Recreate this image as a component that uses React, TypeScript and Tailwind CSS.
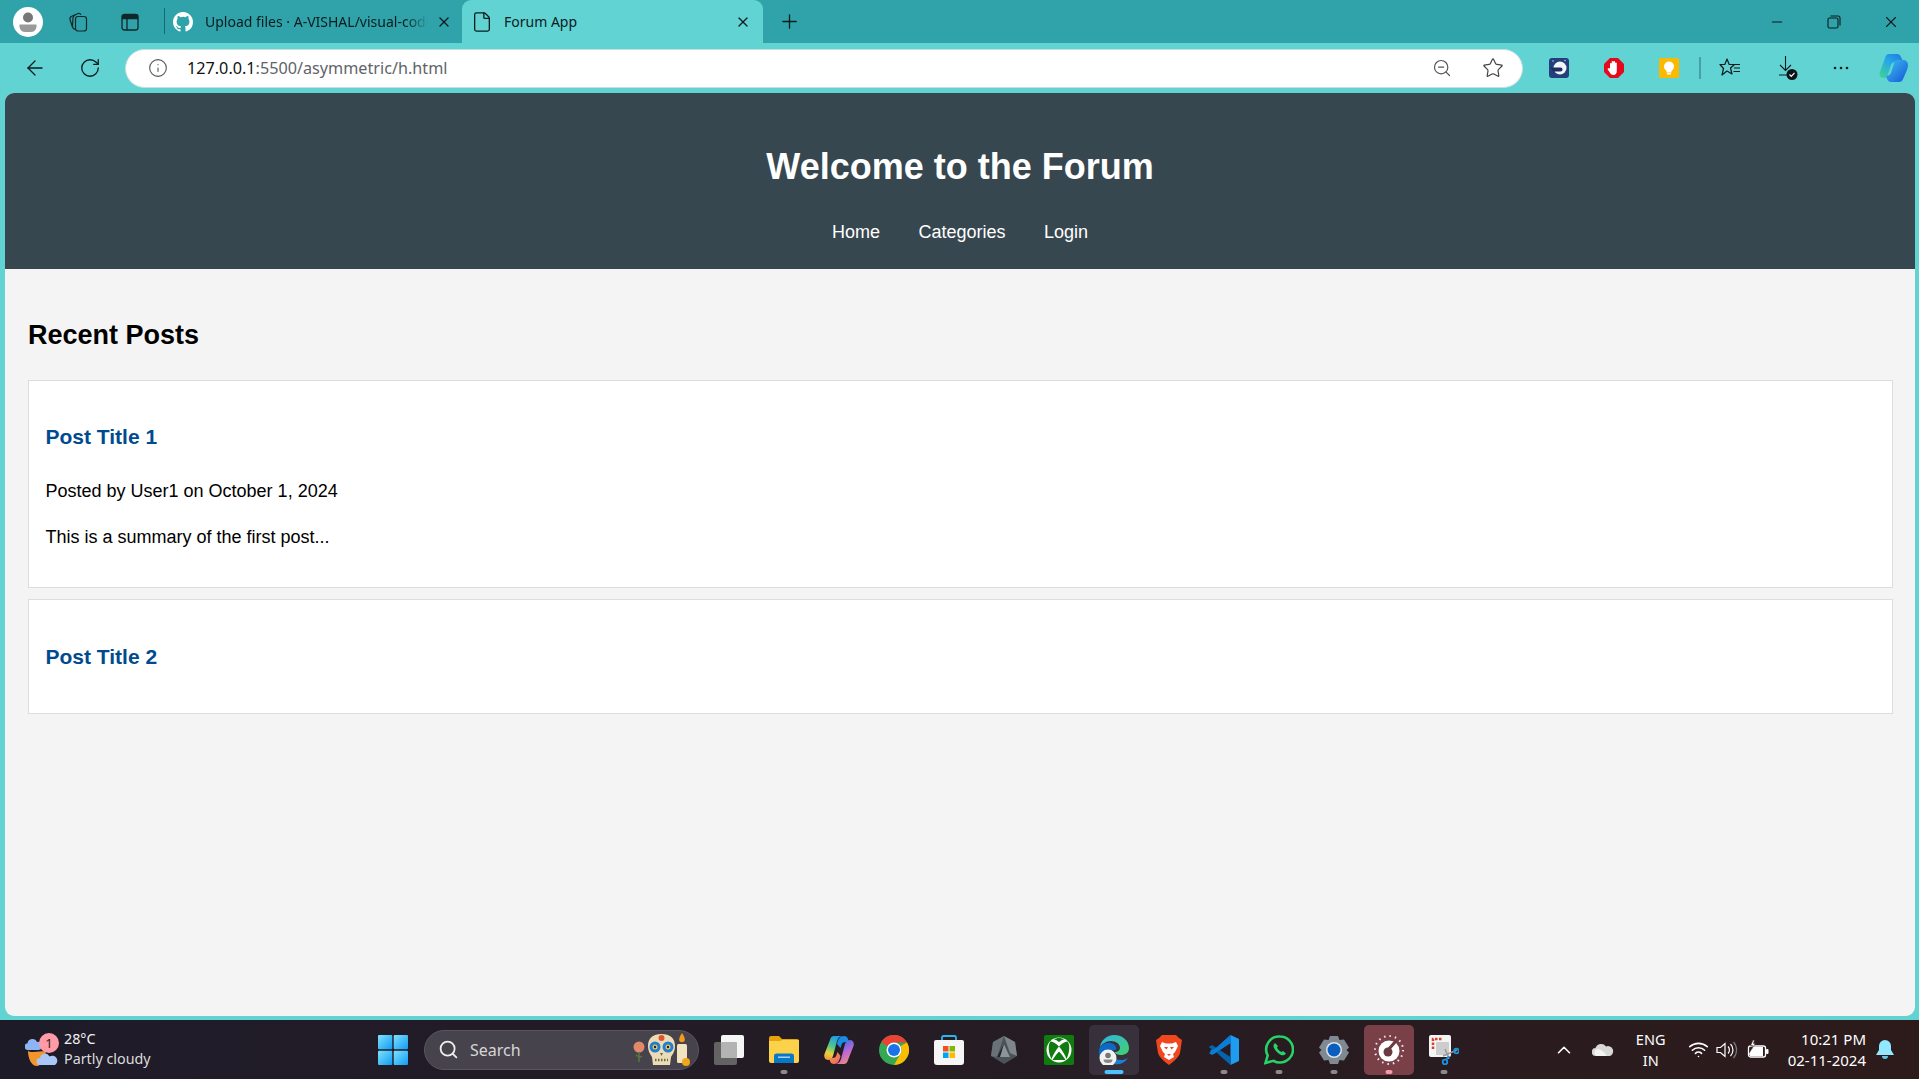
import { ArrowLeft, RotateCw, Info, ZoomOut, Star, X, Plus, Minus, Search, ChevronUp, Wifi, File } from "lucide-react";
import type { ReactNode } from "react";

function Avatar() {
  return (
    <svg width="30" height="30" viewBox="0 0 30 30">
      <circle cx="15" cy="15" r="15" fill="#fff" />
      <circle cx="15" cy="10.5" r="5" fill="#777" />
      <path d="M6.5 17.5h17v2.5a6 6 0 0 1-6 5h-5a6 6 0 0 1-6-5z" fill="#9a9a9a" />
    </svg>
  );
}

function Collections() {
  return (
    <svg width="22" height="22" viewBox="0 0 22 22" fill="none" stroke="#10282a" strokeWidth="1.2">
      <rect x="8.5" y="5.5" width="11" height="14.5" rx="2.5" />
      <path d="M8.5 18.5c-1.5-.3-2.5-1-3-2.5L3 8.5c-.3-1.5.3-2.7 1.700-3.200L11 2.500c1.300-.4 2.300 0 3 1.200" />
      <path d="M5.500 15.500 6 6.500c.2-1.300 1-2 2.300-2.200" />
    </svg>
  );
}

function TabView() {
  return (
    <svg width="20" height="20" viewBox="0 0 20 20" fill="none" stroke="#10282a" strokeWidth="1.3">
      <rect x="2" y="2.500" width="16" height="15.500" rx="2.500" />
      <path d="M2.500 3.500h15v3h-15z" fill="#10282a" />
      <path d="M7 6.500V18" />
    </svg>
  );
}

function GitHub() {
  return (
    <svg width="20" height="20" viewBox="0 0 16 16" fill="#fff">
      <path d="M8 0C3.58 0 0 3.58 0 8c0 3.54 2.29 6.53 5.47 7.59.4.07.55-.17.55-.38 0-.19-.01-.82-.01-1.49-2.01.37-2.53-.49-2.69-.94-.09-.23-.48-.94-.82-1.13-.28-.15-.68-.52-.01-.53.63-.01 1.08.58 1.23.82.72 1.21 1.87.87 2.33.66.07-.52.28-.87.51-1.07-1.78-.2-3.64-.89-3.64-3.95 0-.87.31-1.59.82-2.15-.08-.2-.36-1.02.08-2.12 0 0 .67-.21 2.2.82a7.6 7.6 0 0 1 4 0c1.53-1.04 2.2-.82 2.2-.82.44 1.1.16 1.92.08 2.12.51.56.82 1.27.82 2.15 0 3.07-1.87 3.75-3.65 3.95.29.25.54.73.54 1.48 0 1.07-.01 1.93-.01 2.2 0 .21.15.46.55.38A8 8 0 0 0 16 8c0-4.42-3.58-8-8-8z" />
    </svg>
  );
}

function Restore() {
  return (
    <svg width="14" height="14" viewBox="0 0 14 14" fill="none" stroke="#0b1c1e" strokeWidth="1.1">
      <rect x="1" y="3" width="10" height="10" rx="1.500" />
      <path d="M3.500 1h7.500a2 2 0 0 1 2 2v7.500" />
    </svg>
  );
}

function ExtMoon() {
  return (
    <svg width="20" height="20" viewBox="0 0 20 20">
      <rect width="20" height="20" rx="3" fill="#23407c" />
      <circle cx="11" cy="10" r="6.500" fill="#f3f5fa" />
      <path d="M1 9.500h10.500a2 2 0 0 1 0 4H4z" fill="#1c2f5e" />
      <circle cx="4" cy="3" r=".7" fill="#dfe6f5" />
      <circle cx="16" cy="2.500" r=".7" fill="#dfe6f5" />
    </svg>
  );
}

function ExtStop() {
  return (
    <svg width="20" height="20" viewBox="0 0 20 20">
      <path d="M6 0h8l6 6v8l-6 6H6l-6-6V6z" fill="#e6091c" />
      <path d="M6 10V5.500a.9.9 0 0 1 1.700 0V9V3.500a.9.9 0 0 1 1.700 0V9V3.700a.9.9 0 0 1 1.700 0V9V5a.9.9 0 0 1 1.700 0v8c0 2.500-1.500 4-3.500 4-1.800 0-2.700-1-3.500-2.500L3.700 11.500c-.5-1 .8-1.800 1.500-1z" fill="#fff" />
    </svg>
  );
}

function ExtBulb() {
  return (
    <svg width="20" height="20" viewBox="0 0 20 20">
      <rect width="20" height="20" rx="1.500" fill="#fbb900" />
      <circle cx="10" cy="8.500" r="5" fill="#fff" />
      <rect x="7.500" y="12" width="5" height="2.500" fill="#fff" />
      <rect x="8" y="15" width="4" height="1.500" fill="#fff" />
    </svg>
  );
}

function Favorites() {
  return (
    <svg width="22" height="22" viewBox="0 0 22 22" fill="none" stroke="#0b1c1e" strokeWidth="1.200" strokeLinejoin="round">
      <path d="M8 2 10.200 7.500 H15.500 L11.500 11 13 17 8 14 3 18 4.500 11.500 1 7.500 H5.800z" />
      <path d="M14 7.500h7M15 11h6M14.500 14.500h6.500" />
    </svg>
  );
}

function Download() {
  return (
    <svg width="24" height="26" viewBox="0 0 24 26" fill="none">
      <path d="M8.500 1v14.500M3 10l5.500 5.500L14 10M2 20h8" stroke="#0b1c1e" strokeWidth="1.100" />
      <circle cx="15" cy="19.500" r="5.500" fill="#0b1416" />
      <path d="m12.500 19.500 1.800 1.800 3.200-3.400" stroke="#fff" strokeWidth="1.200" />
    </svg>
  );
}

function Dots() {
  return (
    <svg width="16" height="4" viewBox="0 0 16 4" fill="#0b1c1e">
      <circle cx="2" cy="2" r="1.300" />
      <circle cx="8" cy="2" r="1.300" />
      <circle cx="14" cy="2" r="1.300" />
    </svg>
  );
}

function CopilotLogo() {
  return (
    <svg width="30" height="28" viewBox="0 0 30 28">
      <defs>
        <linearGradient id="cp1" x1="0" y1="0" x2="1" y2="1">
          <stop offset="0" stopColor="#3cc0f0" />
          <stop offset="1" stopColor="#1556d8" />
        </linearGradient>
        <linearGradient id="cp2" x1="0" y1="1" x2=".8" y2="0">
          <stop offset="0" stopColor="#3fd68e" />
          <stop offset=".6" stopColor="#25a8e8" />
          <stop offset="1" stopColor="#1e7ee0" />
        </linearGradient>
      </defs>
      <path d="M10 0h8c2 0 3 1 4 3l3 6c-2-1-4-1-6-1h-3c-2 0-3 1-4 3L9 20c-1 3-3 4-5 4-3 0-4-3-3-6L6 4c.6-2.500 2-4 4-4z" fill="url(#cp2)" />
      <path d="M20 28h-8c-2 0-3-1-4-3l-1-3c2 0 4-1 5-3l3-10c.6-2 2-3 4-3h5c3 0 5 2 5 5 0 2-.5 3-1 5l-4 9c-.6 2-2 3-4 3z" fill="url(#cp1)" />
    </svg>
  );
}

function ToolButton({ w, children }: { w: string; children: ReactNode }) {
  return <div className={`flex shrink-0 items-center justify-center ${w}`}>{children}</div>;
}

function TabStrip() {
  return (
    <div className="flex h-[43px] shrink-0 items-end bg-[#2fa3a9] font-['Noto_Sans',sans-serif] text-[#0b1c1e]">
      <div className="flex h-[43px] w-[164px] shrink-0 items-center pl-[13px]">
        <Avatar />
        <div className="ml-[24px]">
          <Collections />
        </div>
        <div className="ml-[31px]">
          <TabView />
        </div>
      </div>
      <div className="mb-[9px] h-[26px] w-px shrink-0 bg-[#17696e]" />
      <div className="flex h-[43px] w-[297px] shrink-0 items-center pl-[8px]">
        <GitHub />
        <span className="ml-[12px] w-[223px] overflow-hidden text-[14px] whitespace-nowrap [mask-image:linear-gradient(to_right,black_90%,transparent)]">Upload files · A-VISHAL/visual-code</span>
        <X size={16} strokeWidth={1.3} absoluteStrokeWidth className="ml-[8px]" />
      </div>
      <div className="flex h-[43px] w-[301px] shrink-0 items-center rounded-t-[9px] bg-[#62d3d3] pl-[9px]">
        <File size={22} strokeWidth={1.3} absoluteStrokeWidth />
        <span className="ml-[11px] w-[220px] text-[14px]">Forum App</span>
        <X size={16} strokeWidth={1.3} absoluteStrokeWidth className="ml-[11px]" />
      </div>
      <div className="flex h-[43px] w-[52px] shrink-0 items-center justify-center">
        <Plus size={23} strokeWidth={1.3} absoluteStrokeWidth />
      </div>
      <div className="ml-auto flex h-[43px] items-center">
        <ToolButton w="w-[57px]">
          <Minus size={16} strokeWidth={1.1} absoluteStrokeWidth />
        </ToolButton>
        <ToolButton w="w-[57px]">
          <Restore />
        </ToolButton>
        <ToolButton w="w-[57px]">
          <X size={18} strokeWidth={1.1} absoluteStrokeWidth />
        </ToolButton>
      </div>
    </div>
  );
}

function Toolbar() {
  return (
    <div className="flex h-[50px] shrink-0 items-center bg-[#62d3d3] font-['Noto_Sans',sans-serif] text-[#0b1c1e]">
      <ToolButton w="w-[69px]">
        <ArrowLeft size={24} strokeWidth={1.3} absoluteStrokeWidth />
      </ToolButton>
      <ToolButton w="w-[41px]">
        <RotateCw size={22} strokeWidth={1.3} absoluteStrokeWidth />
      </ToolButton>
      <div className="ml-[15px] flex h-[39px] w-[1398px] shrink-0 items-center rounded-full border border-[#c9dede] bg-white pl-[22px]">
        <Info size={20} strokeWidth={1.1} absoluteStrokeWidth className="text-[#555]" />
        <span className="ml-[19px] text-[16.2px] text-[#5f6368]">
          <span className="text-[#111]">127.0.0.1</span>:5500/asymmetric/h.html
        </span>
        <div className="ml-auto flex items-center pr-[18px]">
          <ZoomOut size={20} strokeWidth={1.2} absoluteStrokeWidth className="text-[#555]" />
          <Star size={22} strokeWidth={1.2} absoluteStrokeWidth className="ml-[30px] text-[#444]" />
        </div>
      </div>
      <div className="ml-[16px] flex flex-1 items-center">
        <ToolButton w="w-[40px]">
          <ExtMoon />
        </ToolButton>
        <ToolButton w="w-[40px] ml-[15px]">
          <ExtStop />
        </ToolButton>
        <ToolButton w="w-[40px] ml-[15px]">
          <ExtBulb />
        </ToolButton>
        <div className="ml-[10px] h-[22px] w-[2px] bg-[#48a0a3]" />
        <ToolButton w="w-[40px] ml-[9px]">
          <Favorites />
        </ToolButton>
        <ToolButton w="w-[40px] ml-[19px]">
          <Download />
        </ToolButton>
        <ToolButton w="w-[40px] ml-[12px]">
          <Dots />
        </ToolButton>
        <ToolButton w="w-[40px] ml-[13px]">
          <CopilotLogo />
        </ToolButton>
      </div>
    </div>
  );
}

function ForumPage() {
  return (
    <div className="mr-[4px] mb-[4px] ml-[5px] flex-1 overflow-hidden rounded-[9px] bg-[#f4f4f4] font-['Liberation_Sans',Arial,sans-serif] text-black">
      <header className="h-[176px] bg-[#37474f] pt-[51px] text-center text-white">
        <h1 className="text-[36px] leading-[46px] font-bold">Welcome to the Forum</h1>
        <nav className="mt-[32px] flex justify-center gap-[38.5px] text-[18px] leading-[20px]">
          <span>Home</span>
          <span>Categories</span>
          <span>Login</span>
        </nav>
      </header>
      <main className="pt-[49px] pr-[22px] pl-[23px]">
        <h2 className="text-[27px] leading-[34px] font-bold">Recent Posts</h2>
        <article className="mt-[28px] h-[208px] border border-[#ddd] bg-white px-[16.5px] pt-[44px]">
          <h3 className="text-[21px] leading-[24px] font-bold text-[#004a8f]">Post Title 1</h3>
          <p className="mt-[32px] text-[18px] leading-[20px]">Posted by User1 on October 1, 2024</p>
          <p className="mt-[26px] text-[18px] leading-[20px]">This is a summary of the first post...</p>
        </article>
        <article className="mt-[11px] h-[115px] border border-[#ddd] bg-white px-[16.5px] pt-[45px]">
          <h3 className="text-[21px] leading-[24px] font-bold text-[#004a8f]">Post Title 2</h3>
        </article>
      </main>
    </div>
  );
}

function Weather() {
  return (
    <svg width="34" height="34" viewBox="0 0 34 34">
      <path d="M3 18c2 1 3 1 5 1 5 0 9-1 13-1-1 7-5 15-9 15-6 0-9-8-9-15z" fill="#f2962b" />
      <path d="M2 17a3.500 3.500 0 0 1 .5-6.800A5 5 0 0 1 12 9a4 4 0 0 1 2 8z" fill="#8db4f5" />
      <path d="M15 32a3.500 3.500 0 0 1 0-7 5 5 0 0 1 9.500-1.500A4.500 4.500 0 0 1 30 32z" fill="#a9c6f7" />
      <circle cx="24" cy="10" r="10" fill="#ff9aa6" />
      <text x="24" y="14.500" textAnchor="middle" fontSize="13" fill="#2a1a1e" fontFamily="Noto Sans">1</text>
    </svg>
  );
}

function WinLogo() {
  return (
    <svg width="30" height="30" viewBox="0 0 30 30">
      <defs>
        <linearGradient id="win" x1="0" y1="0" x2="1" y2="1">
          <stop offset="0" stopColor="#7fe2fb" />
          <stop offset="1" stopColor="#0f9bf5" />
        </linearGradient>
      </defs>
      <rect width="14.300" height="14.300" rx="1" fill="url(#win)" />
      <rect x="15.700" width="14.300" height="14.300" rx="1" fill="url(#win)" />
      <rect y="15.700" width="14.300" height="14.300" rx="1" fill="url(#win)" />
      <rect x="15.700" y="15.700" width="14.300" height="14.300" rx="1" fill="url(#win)" />
    </svg>
  );
}

function Skull() {
  return (
    <svg width="58" height="34" viewBox="0 0 58 34">
      <circle cx="7" cy="14" r="5.500" fill="#e08a6a" />
      <path d="M7 19v10M7 24l-3-2M7 25l3-2" stroke="#5d7a3e" strokeWidth="1.400" fill="none" />
      <path d="M16 13C16 5 21 1 29.500 1S43 5 43 13c0 6-3 9-4 11l-1 8H21l-1-8c-1-2-4-5-4-11z" fill="#ecdcb6" />
      <circle cx="23" cy="14" r="5.500" fill="#1f7fd6" />
      <circle cx="36" cy="14" r="5.500" fill="#1f7fd6" />
      <circle cx="23" cy="14" r="2.500" fill="#f0c94a" />
      <circle cx="36" cy="14" r="2.500" fill="#f0c94a" />
      <circle cx="23" cy="14" r="1.200" fill="#222" />
      <circle cx="36" cy="14" r="1.200" fill="#222" />
      <circle cx="29.500" cy="5" r="3" fill="#e0552e" />
      <path d="M28 20h3l-1.500 3z" fill="#6a6a4a" />
      <path d="M23 27h13" stroke="#6a6a4a" strokeWidth="2.500" strokeDasharray="1.500 1.500" />
      <rect x="45" y="11" width="10" height="19" rx="1.500" fill="#f2e3c0" />
      <path d="M50 0c2 3 2.800 5 2.800 6.500a2.800 2.800 0 0 1-5.600 0C47.200 5 48 3 50 0z" fill="#f29b1d" />
      <circle cx="54" cy="29" r="4" fill="#f2a71b" />
    </svg>
  );
}

function TaskView() {
  return (
    <svg width="30" height="30" viewBox="0 0 30 30">
      <rect x="0" y="7" width="23" height="23" rx="2" fill="#636363" />
      <rect x="7" y="0" width="23" height="23" rx="2" fill="#f5f5f5" />
      <rect x="7" y="7" width="16" height="16" rx="1" fill="#b3b3b3" />
    </svg>
  );
}

function FolderIcon() {
  return (
    <svg width="30" height="27" viewBox="0 0 30 27">
      <path d="M0 2a2 2 0 0 1 2-2h8l3 3h15a2 2 0 0 1 2 2v5H0z" fill="#e5a50a" />
      <path d="M0 5h11l2-1h17v21a2 2 0 0 1-2 2H2a2 2 0 0 1-2-2z" fill="#fdd24b" />
      <path d="M5 27v-7a2.500 2.500 0 0 1 2.500-2.500h15A2.500 2.500 0 0 1 25 20v7z" fill="#0a78c9" />
      <rect x="9" y="20.500" width="12" height="1.500" fill="#9fd4f7" />
    </svg>
  );
}

function CopilotColor() {
  return (
    <svg width="30" height="28" viewBox="0 0 30 28">
      <defs>
        <linearGradient id="cc1" x1=".6" y1="0" x2=".3" y2="1">
          <stop offset="0" stopColor="#1f9ce8" />
          <stop offset=".45" stopColor="#4fc98a" />
          <stop offset=".75" stopColor="#e8d23a" />
          <stop offset="1" stopColor="#f0a13b" />
        </linearGradient>
        <linearGradient id="cc2" x1=".3" y1="0" x2=".7" y2="1">
          <stop offset="0" stopColor="#2a70e6" />
          <stop offset=".5" stopColor="#b867d8" />
          <stop offset="1" stopColor="#f08c7a" />
        </linearGradient>
        <linearGradient id="cc3" x1="0" y1="0" x2="1" y2="1">
          <stop offset="0" stopColor="#f7a03c" />
          <stop offset="1" stopColor="#ef5f6a" />
        </linearGradient>
      </defs>
      <path d="M10 0h8c-3 .5-4 2.500-5 5L9 20c-1 3-3 4-5 4-3 0-4.500-3-3.500-6L6 4c.6-2.500 2-4 4-4z" fill="url(#cc1)" />
      <path d="M20 0c2 0 3.500 1 4 3l1 3h-3c-3 0-4 1-4.500 3l-1 3L13 8c1-5 3-8 7-8z" fill="#1b8be4" />
      <path d="M20 28h-8c3-.5 4-2.500 5-5l4-15c1-3 3-4 5-4 3 0 4.500 3 3.500 6L24 24c-.6 2.500-2 4-4 4z" fill="url(#cc2)" />
      <path d="M10 28c-2 0-3.500-1-4-3l-1-3h3c3 0 4-1 4.500-3l1-3 3 4c-1 5-3 8-6.500 8z" fill="url(#cc3)" />
    </svg>
  );
}

function ChromeIcon() {
  return (
    <svg width="30" height="30" viewBox="0 0 30 30">
      <circle cx="15" cy="15" r="15" fill="#34a853" />
      <path d="M15 0a15 15 0 0 1 13 7.500H15a7.500 7.500 0 0 0-6.500 3.750L2.200 7A15 15 0 0 1 15 0z" fill="#ea4335" />
      <path d="M28 7.500A15 15 0 0 1 15 30l6.500-11.250A7.500 7.500 0 0 0 21.500 11z" fill="#fbbc04" />
      <circle cx="15" cy="15" r="7.500" fill="#fff" />
      <circle cx="15" cy="15" r="6" fill="#1a73e8" />
    </svg>
  );
}

function StoreIcon() {
  return (
    <svg width="30" height="30" viewBox="0 0 30 30">
      <path d="M8 6V2.500A1.500 1.500 0 0 1 9.500 1h11A1.500 1.500 0 0 1 22 2.500V6" fill="none" stroke="#29b6f0" strokeWidth="1.800" />
      <path d="M0 7a2 2 0 0 1 2-2h26a2 2 0 0 1 2 2v20a3 3 0 0 1-3 3H3a3 3 0 0 1-3-3z" fill="#f6f6f6" />
      <rect x="9" y="11" width="5.500" height="5.500" fill="#f25022" />
      <rect x="15.500" y="11" width="5.500" height="5.500" fill="#7fba00" />
      <rect x="9" y="17.500" width="5.500" height="5.500" fill="#00a4ef" />
      <rect x="15.500" y="17.500" width="5.500" height="5.500" fill="#ffb900" />
    </svg>
  );
}

function PrismIcon() {
  return (
    <svg width="26" height="28" viewBox="0 0 26 28">
      <path d="M13 0 24 6l2 14-13 8L0 20 2 6z" fill="#4b5258" />
      <path d="M13 0 24 6l2 14-7-3z" fill="#7e858b" />
      <path d="M13 8 6 21h13z" fill="#22262a" />
      <path d="M13 0 2 6 0 20l6 1z" fill="#6a7177" />
      <path d="M13 8l6 13H9z" fill="#8e959a" />
    </svg>
  );
}

function XboxIcon() {
  return (
    <svg width="30" height="30" viewBox="0 0 30 30">
      <rect width="30" height="30" rx="2" fill="#107c10" />
      <circle cx="15" cy="15" r="12.500" fill="#fff" />
      <path d="M15 11.500C12 8.500 8.500 6 6.500 6.500 3.500 10 4.500 18 7.500 24c1.500-4.500 4.500-9 7.500-12.500zM15 11.500c3-3 6.500-5.500 8.500-5 3 3.500 2 11.500-1 17.500-1.500-4.500-4.500-9-7.500-12.500zM15 16.500c-2.500 2.500-5 6-6.500 8.500l13 0C20 22.500 17.500 19 15 16.500z" fill="#107c10" />
      <path d="M15 3c-2 0-3.500.5-5 1.500 1.500.2 3.500 1.300 5 2.500 1.500-1.200 3.500-2.300 5-2.500C18.500 3.500 17 3 15 3z" fill="#107c10" />
    </svg>
  );
}

function EdgeIcon() {
  return (
    <svg width="30" height="30" viewBox="0 0 30 30">
      <defs>
        <linearGradient id="edge" x1="0" y1="0" x2="1" y2="1">
          <stop offset="0" stopColor="#2fb4e8" />
          <stop offset="1" stopColor="#43d06a" />
        </linearGradient>
      </defs>
      <path d="M15 0c9 0 15 6 15 13 0 5-4 7-8 7-3 0-6-1-6-3 3 0 5-2 5-4 0-4-4-7-9-7C7 6 3 9 1 12 2 5 8 0 15 0z" fill="url(#edge)" />
      <path d="M1 12c3-3 6-5 11-4 4 1 6 4 5 7-5 0-10 3-10 8 0 3 3 6 7 7-8 0-14-6-14-12 0-3 0-4 1-6z" fill="#0c6ac4" />
      <path d="M15 29c4 1 10 0 14-6-3 2-8 3-12 1z" fill="#1b7fd2" />
      <circle cx="9" cy="23" r="8.500" fill="#f2f2f2" />
      <circle cx="9" cy="20.500" r="2.800" fill="#777" />
      <path d="M4.500 24.500h9a4.500 3.500 0 0 1-9 0z" fill="#888" />
    </svg>
  );
}

function BraveIcon() {
  return (
    <svg width="26" height="30" viewBox="0 0 26 30">
      <path d="M6 0h14l3 3 3 2-2 13c-1 4-7 9-11 12C9 27 3 22 2 18L0 5l3-2z" fill="#f0471f" />
      <path d="M6 7l4 1.500h6L20 7l2 4-3 6-2 2 1 3-5 3-5-3 1-3-2-2-3-6z" fill="#fff" />
      <path d="M8 12h4l-1.500 2.500zM14 12h4l-2.500 2.500zM11 19h4l-2 2z" fill="#f0471f" />
    </svg>
  );
}

function VSCodeIcon() {
  return (
    <svg width="30" height="30" viewBox="0 0 30 30">
      <path d="M21.500 0 30 4v22l-8.500 4z" fill="#1f9cf0" />
      <path d="M21.500 0v8L10 15l-5 4-4-3 3-3 5 0z" fill="#0a7ed6" />
      <path d="M21.500 0 6 14l-3.500-3L0 12l8 5L21.500 8z" fill="#0a7ed6" />
      <path d="M0 12l3-2 18.500 12v8L8 18z" fill="#0465ad" />
      <path d="M0 18l3 2 18.500-12V0L8 12z" fill="#0a7ed6" />
    </svg>
  );
}

function WhatsAppIcon() {
  return (
    <svg width="30" height="30" viewBox="0 0 30 30">
      <path d="M16 1.500a13 13 0 0 1 0 26c-2.500 0-4.500-.5-6.500-1.700L1.500 28l2.200-7.500A13 13 0 0 1 16 1.500z" fill="none" stroke="#25d366" strokeWidth="2.600" />
      <path d="M11 8c-1.500 1-2 3-1 5 1.500 3 4 5.500 7 7 2 .8 4 0 5-1.500l-3-2.500-1.500 1c-2-1-3.500-2.500-4.500-4.500l1-1.500z" fill="#25d366" />
    </svg>
  );
}

function SettingsIcon() {
  return (
    <svg width="30" height="28" viewBox="0 0 30 28">
      <path d="M11 0h8l1.500 4 4.500-.5 5 8-2.500 2.500 2.500 2.500-5 8-4.500-.5L19 28h-8l-1.500-4-4.500.5-5-8L2.500 14 0 11.500l5-8 4.500.5z" fill="#7f8991" />
      <circle cx="15" cy="14" r="8" fill="#dfe4e8" />
      <circle cx="15" cy="14" r="6.500" fill="#0a5ec0" />
    </svg>
  );
}

function GaugeIcon() {
  return (
    <svg width="30" height="30" viewBox="0 0 30 30">
      <circle cx="15" cy="15" r="14" fill="none" stroke="#f3e7e8" strokeWidth="2" strokeDasharray="1.500 4" />
      <circle cx="15" cy="16" r="10.500" fill="#fff" />
      <circle cx="14" cy="17" r="4.500" fill="#6a3a40" />
      <path d="M22 6 14 15" stroke="#6a3a40" strokeWidth="3" />
    </svg>
  );
}

function SnipIcon() {
  return (
    <svg width="30" height="30" viewBox="0 0 30 30">
      <rect x="0" y="0" width="22" height="22" rx="2" fill="#f4f4f4" />
      <rect x="7" y="7" width="13" height="13" rx="1" fill="#cdcdcd" />
      <path d="M4 14V4h10" fill="none" stroke="#d9402a" strokeWidth="2.500" strokeDasharray="2.500 1.500" />
      <path d="M16 14 20 24M28 15 14 21" stroke="#9a9a9a" strokeWidth="1.500" />
      <circle cx="27.500" cy="16" r="2.300" fill="none" stroke="#1b93e4" strokeWidth="1.800" />
      <circle cx="16" cy="27" r="2.300" fill="none" stroke="#1b93e4" strokeWidth="1.800" />
      <path d="M20 21 17 25" stroke="#1b93e4" strokeWidth="1.800" />
    </svg>
  );
}

function TaskbarItem({ icon, dot, box }: { icon: ReactNode; dot?: string; box?: string }) {
  return (
    <div className={`relative mx-[2.5px] flex h-[50px] w-[50px] shrink-0 items-center justify-center rounded-[5px] ${box ?? ""}`}>
      {icon}
      {dot && <span className={`absolute bottom-[1px] left-1/2 h-[4px] -translate-x-1/2 rounded-full ${dot}`} />}
    </div>
  );
}

function Tray() {
  return (
    <div className="ml-auto flex h-full items-center text-white">
      <ChevronUp size={22} strokeWidth={1.6} absoluteStrokeWidth />
      <svg width="22" height="14" viewBox="0 0 22 14" className="ml-[17px]">
        <path d="M4 13a4 4 0 0 1-.5-8A6 6 0 0 1 14 3.500 4.500 4.500 0 0 1 18 13z" fill="#d8d8d8" />
        <path d="M4 13a4 4 0 0 1 1-7c4 0 7 3 10 7z" fill="#f4f4f4" />
      </svg>
      <div className="ml-[22px] w-[30px] text-center text-[14.5px] leading-[21px]">
        <div>ENG</div>
        <div>IN</div>
      </div>
      <Wifi size={21} strokeWidth={1.6} absoluteStrokeWidth className="ml-[22px]" />
      <svg width="22" height="18" viewBox="0 0 22 18" fill="none" stroke="#fff" strokeWidth="1.200" className="ml-[7px]">
        <path d="M1 6.500h3.500L9 2.500v13l-4.500-4H1z" />
        <path d="M12 5.500a5 5 0 0 1 0 7M14.500 3a8.500 8.500 0 0 1 0 12" />
        <path d="M17.500 1a12 12 0 0 1 0 16" stroke="#777" />
      </svg>
      <svg width="22" height="20" viewBox="0 0 22 20" className="ml-[9px]">
        <rect x="1.500" y="6" width="17" height="11" rx="2" fill="none" stroke="#fff" strokeWidth="1.300" />
        <path d="M2 14 6 7h10v9H3z" fill="#fff" />
        <rect x="19" y="9" width="2.500" height="5" rx="1" fill="#fff" />
        <path d="M6 0 3.500 5.500h2L4.500 9 8.500 3.500h-2L7.500 0z" fill="#fff" stroke="#2a1b1d" strokeWidth=".6" />
      </svg>
      <div className="ml-[19px] text-right text-[15px] leading-[21px]">
        <div>10:21 PM</div>
        <div>02-11-2024</div>
      </div>
      <svg width="18" height="20" viewBox="0 0 18 20" className="mr-[25px] ml-[10px]">
        <path d="M9 0a6 6 0 0 1 6 6v4l3 5H0l3-5V6a6 6 0 0 1 6-6z" fill="#92e8ff" />
        <path d="M6 16h6a3 3 0 0 1-6 0z" fill="#65c7e6" />
      </svg>
    </div>
  );
}

function Taskbar() {
  return (
    <div className="flex h-[59px] shrink-0 items-center bg-gradient-to-r from-[#1e1b29] via-[#251c24] to-[#2d1b1b] font-['Noto_Sans',sans-serif] text-[#f2f2f2]">
      <div className="flex w-[378px] shrink-0 items-center pl-[25px]">
        <Weather />
        <div className="mb-[2px] ml-[5px] text-[14.3px] leading-[20px]">
          <div>28°C</div>
          <div className="text-[#dcdcdc]">Partly cloudy</div>
        </div>
      </div>
      <WinLogo />
      <div className="ml-[16px] flex h-[40px] w-[275px] shrink-0 items-center rounded-full border border-[#5a5660] bg-[#47434d] pl-[13px]">
        <Search size={21} strokeWidth={1.8} absoluteStrokeWidth className="text-[#eee]" />
        <span className="ml-[11px] text-[16px] text-[#d6d6d6]">Search</span>
        <div className="ml-auto pr-[8px]">
          <Skull />
        </div>
      </div>
      <div className="ml-[2px] flex items-center">
        <TaskbarItem icon={<TaskView />} />
        <TaskbarItem icon={<FolderIcon />} dot="w-[7px] bg-[#8a8a8a]" />
        <TaskbarItem icon={<CopilotColor />} />
        <TaskbarItem icon={<ChromeIcon />} />
        <TaskbarItem icon={<StoreIcon />} />
        <TaskbarItem icon={<PrismIcon />} />
        <TaskbarItem icon={<XboxIcon />} />
        <TaskbarItem icon={<EdgeIcon />} box="bg-[#38303a]" dot="w-[19px] bg-[#4cc2ff]" />
        <TaskbarItem icon={<BraveIcon />} />
        <TaskbarItem icon={<VSCodeIcon />} dot="w-[7px] bg-[#8a8a8a]" />
        <TaskbarItem icon={<WhatsAppIcon />} dot="w-[7px] bg-[#8a8a8a]" />
        <TaskbarItem icon={<SettingsIcon />} dot="w-[7px] bg-[#8a8a8a]" />
        <TaskbarItem icon={<GaugeIcon />} box="bg-[#7a4048]" dot="w-[7px] bg-[#f59aa6]" />
        <TaskbarItem icon={<SnipIcon />} dot="w-[7px] bg-[#8a8a8a]" />
      </div>
      <Tray />
    </div>
  );
}

export default function App() {
  return (
    <div className="flex h-screen w-full flex-col overflow-hidden bg-[#62d3d3]">
      <TabStrip />
      <Toolbar />
      <ForumPage />
      <Taskbar />
    </div>
  );
}
